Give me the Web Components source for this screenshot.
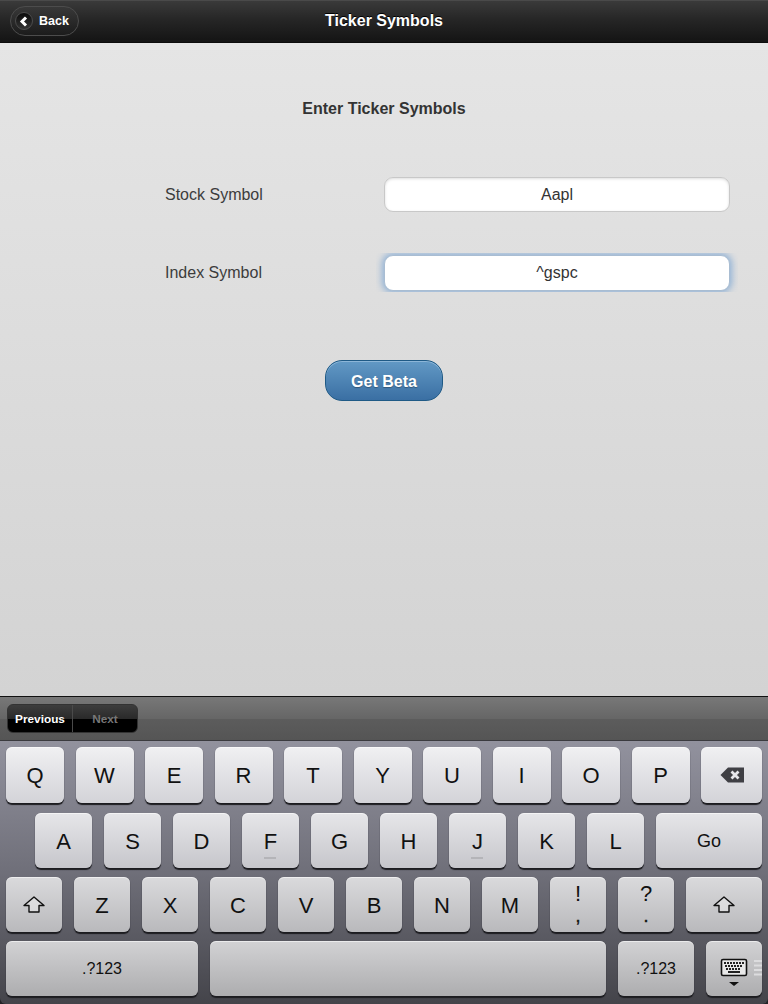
<!DOCTYPE html>
<html>
<head>
<meta charset="utf-8">
<title>Ticker Symbols</title>
<style>
  html, body { margin: 0; padding: 0; }
  body {
    width: 768px;
    height: 1004px;
    overflow: hidden;
    display: flex;
    flex-direction: column;
    background: #232327;
    font-family: "Liberation Sans", Arial, sans-serif;
  }
  svg { display: block; }
</style>
</head>
<body>
<ticker-header title-text="Ticker Symbols" back-text="Back"></ticker-header>
<ticker-page>
  <symbol-field label="Stock Symbol" value="Aapl"></symbol-field>
  <symbol-field label="Index Symbol" value="^gspc" focused></symbol-field>
</ticker-page>
<key-toolbar></key-toolbar>
<key-board>
  <key-row gap="11.5" top="#f0f0f2" bottom="#d3d3d8" style="height:56px;margin-bottom:10px">
    <key-cap w="58">Q</key-cap><key-cap w="58">W</key-cap><key-cap w="58">E</key-cap><key-cap w="58">R</key-cap><key-cap w="58">T</key-cap><key-cap w="58">Y</key-cap><key-cap w="58">U</key-cap><key-cap w="58">I</key-cap><key-cap w="58">O</key-cap><key-cap w="58">P</key-cap>
    <key-cap w="61"><svg width="24" height="16" viewBox="0 0 24 16"><path d="M0.5 8 L8 0.5 H24 V15.5 H8 Z" fill="#3f3f44"/><path d="M11.5 4.5 L18.5 11.5 M18.5 4.5 L11.5 11.5" stroke="#e6e6ea" stroke-width="2.8" fill="none"/></svg></key-cap>
  </key-row>
  <key-row gap="12" top="#e6e6e9" bottom="#c6c6cb" style="height:55px;margin-bottom:9px;padding-left:29px">
    <key-cap w="57">A</key-cap><key-cap w="57">S</key-cap><key-cap w="57">D</key-cap><key-cap w="57" mark>F</key-cap><key-cap w="57">G</key-cap><key-cap w="57">H</key-cap><key-cap w="57" mark>J</key-cap><key-cap w="57">K</key-cap><key-cap w="57">L</key-cap>
    <key-cap w="106" size="18">Go</key-cap>
  </key-row>
  <key-row gap="12" top="#dadadc" bottom="#b9b9bc" style="height:55px;margin-bottom:9px">
    <key-cap w="56"><shift-icon></shift-icon></key-cap>
    <key-cap w="56">Z</key-cap><key-cap w="56">X</key-cap><key-cap w="56">C</key-cap><key-cap w="56">V</key-cap><key-cap w="56">B</key-cap><key-cap w="56">N</key-cap><key-cap w="56">M</key-cap>
    <key-cap w="56" upper="!" lower=","></key-cap>
    <key-cap w="56" upper="?" lower="."></key-cap>
    <key-cap w="76"><shift-icon></shift-icon></key-cap>
  </key-row>
  <key-row gap="12" top="#d2d2d4" bottom="#adadaf" style="height:55px">
    <key-cap w="192" size="16">.?123</key-cap>
    <key-cap w="396"></key-cap>
    <key-cap w="76" size="16">.?123</key-cap>
    <key-cap w="56"><dismiss-icon></dismiss-icon></key-cap>
  </key-row>
</key-board>

<script>
class TickerHeader extends HTMLElement {
  connectedCallback() {
    this.attachShadow({ mode: 'open' });
    this.shadowRoot.innerHTML = `
      <style>
        :host {
          display: block;
          flex: none;
          height: 43px;
          border-top: 1px solid #4a4a4a;
          box-sizing: border-box;
          background: linear-gradient(#3a3a3a, #262626 45%, #141414);
          border-bottom: 1px solid #0c0c0c;
        }
        .bar { position: relative; height: 100%; display: flex; align-items: center; padding-left: 10px; }
        .back {
          display: flex;
          align-items: center;
          box-sizing: border-box;
          height: 30px;
          width: 69px;
          padding-left: 4px;
          border-radius: 15px;
          border: 1px solid #4c4c4c;
          background: linear-gradient(#383838, #1c1c1c);
          color: #fff;
          font: bold 12.5px "Liberation Sans", Arial, sans-serif;
          margin-top: -1px;
        }
        .arrow {
          width: 18px; height: 18px; border-radius: 50%;
          background: linear-gradient(#0c0c0c, #333);
          border: 1px solid #4c4c4c; box-sizing: border-box;
          display: flex; align-items: center; justify-content: center;
          margin-right: 6px;
        }
        h1 {
          position: absolute; left: 0; right: 0; top: 0; bottom: 0;
          margin: 0; display: flex; align-items: center; justify-content: center;
          font: bold 16px "Liberation Sans", Arial, sans-serif;
          color: #fff; padding-bottom: 1px;
          text-shadow: 0 -1px 0 #000;
        }
      </style>
      <div class="bar">
        <h1>${this.getAttribute('title-text')}</h1>
        <div class="back">
          <span class="arrow"><svg width="10" height="11" viewBox="0 0 10 11"><path d="M7 1.5 L3 5.5 L7 9.5" stroke="#fff" stroke-width="3" fill="none"/></svg></span>
          ${this.getAttribute('back-text')}
        </div>
      </div>`;
  }
}

class TickerPage extends HTMLElement {
  connectedCallback() {
    this.attachShadow({ mode: 'open' });
    this.shadowRoot.innerHTML = `
      <style>
        :host {
          display: block;
          flex: none;
          height: 653px;
          background: linear-gradient(#e5e5e5, #d3d3d3);
          color: #333;
          font-family: "Liberation Sans", Arial, sans-serif;
        }
        h2 { margin: 0; padding-top: 57px; height: 77px; text-align: center; font-size: 16px; line-height: 18px; font-weight: bold; }
        .actions { display: flex; justify-content: center; padding-top: 26px; }
        button {
          box-sizing: border-box;
          width: 118px; height: 41px;
          border-radius: 17px;
          border: 1px solid #1f5a86;
          background: linear-gradient(#6299c5, #3a6fa3);
          box-shadow: inset 0 1px 0 #8cb6d8;
          color: #fff;
          font: bold 16px "Liberation Sans", Arial, sans-serif;
          padding: 2px 0 0;
          text-shadow: 0 1px 1px rgba(0,0,0,.3);
        }
      </style>
      <h2>Enter Ticker Symbols</h2>
      <slot></slot>
      <div class="actions"><button>Get Beta</button></div>`;
  }
}

class SymbolField extends HTMLElement {
  connectedCallback() {
    this.attachShadow({ mode: 'open' });
    const focused = this.hasAttribute('focused');
    this.shadowRoot.innerHTML = `
      <style>
        :host {
          display: flex;
          align-items: center;
          height: ${focused ? 36 : 35}px;
          padding: 0 38px 0 165px;
          margin-bottom: 43px;
          font-size: 16px;
          color: #3c3c3c;
        }
        label { width: 219px; flex: none; }
        .input {
          flex: 1;
          height: 100%;
          box-sizing: border-box;
          background: #fff;
          border-radius: 9px;
          border: 1px solid ${focused ? '#a9bdd2' : '#c8c8c8'};
          box-shadow: ${focused ? '0 0 7px 2px #8fb1d6' : 'inset 0 1px 3px #ddd'};
          ${focused ? 'clip-path: inset(-2px -8px -1px -8px);' : ''}
          text-align: center;
          line-height: 34px;
          color: #333;
        }
      </style>
      <label>${this.getAttribute('label')}</label>
      <div class="input">${this.getAttribute('value')}</div>`;
  }
}

class KeyToolbar extends HTMLElement {
  connectedCallback() {
    this.attachShadow({ mode: 'open' });
    this.shadowRoot.innerHTML = `
      <style>
        :host {
          display: flex;
          align-items: center;
          flex: none;
          box-sizing: border-box;
          height: 45px;
          padding: 0 0 0 7px;
          border-top: 1px solid #111;
          border-bottom: 1px solid #3a3a3e;
          background: linear-gradient(#787878, #666 50%, #5c5c5c 52%, #555);
          font: bold 11.8px "Liberation Sans", Arial, sans-serif;
        }
        .seg {
          display: flex;
          height: 29px;
          width: 131px;
          border-radius: 6px;
          overflow: hidden;
          border: 1px solid #333;
          box-sizing: border-box;
          background: linear-gradient(#3d3d3d, #2a2a2a 50%, #000 52%, #000);
        }
        span { display: flex; align-items: center; justify-content: center; }
        .prev { width: 64px; color: #fff; border-right: 1px solid #4a4a4a; }
        .next { flex: 1; color: #777; }
      </style>
      <div class="seg"><span class="prev">Previous</span><span class="next">Next</span></div>`;
  }
}

class KeyBoard extends HTMLElement {
  connectedCallback() {
    this.attachShadow({ mode: 'open' });
    this.shadowRoot.innerHTML = `
      <style>
        :host {
          display: block;
          flex: none;
          height: 263px;
          box-sizing: border-box;
          padding: 6px 6px 0;
          background: linear-gradient(#92929e, #6f6f79 50%, #44444a);
          border-radius: 0 0 6px 6px;
        }
      </style>
      <slot></slot>`;
  }
}

class KeyRow extends HTMLElement {
  connectedCallback() {
    this.attachShadow({ mode: 'open' });
    this.shadowRoot.innerHTML = `
      <style>
        :host {
          display: flex;
          gap: ${this.getAttribute('gap')}px;
          --key-top: ${this.getAttribute('top')};
          --key-bottom: ${this.getAttribute('bottom')};
        }
      </style>
      <slot></slot>`;
  }
}

class KeyCap extends HTMLElement {
  connectedCallback() {
    this.attachShadow({ mode: 'open' });
    const upper = this.getAttribute('upper');
    const size = this.getAttribute('size') || 22;
    const hasText = !this.firstElementChild && this.textContent.trim();
    const mark = this.hasAttribute('mark') ? '<i></i>' : '';
    const inner = upper
      ? `<span class="stack"><b class="up">${upper}</b><b class="low">${this.getAttribute('lower')}</b></span>`
      : '<slot></slot>';
    this.shadowRoot.innerHTML = `
      <style>
        :host {
          display: flex;
          flex: none;
          position: relative;
          width: ${this.getAttribute('w')}px;
          box-sizing: border-box;
          padding-top: ${hasText && size != 16 ? 2 : 0}px;
          align-items: center;
          justify-content: center;
          border-radius: 6px;
          background: linear-gradient(var(--key-top), var(--key-bottom));
          box-shadow: 0 1.5px 1px #1c1c20, inset 0 1px 0 rgba(255,255,255,.55);
          color: #111;
          font: ${size}px "Liberation Sans", Arial, sans-serif;
        }
        .stack { display: flex; flex-direction: column; align-items: center; margin-top: -1px; }
        b { font-weight: normal; display: block; }
        .up { line-height: 25px; }
        .low { font-size: 18px; line-height: 21px; -webkit-text-stroke: 0.4px #111; }
        i { position: absolute; left: 22px; width: 12px; bottom: 9px; height: 2px; background: #b4b4b8; }
      </style>
      ${inner}${mark}`;
  }
}

class ShiftIcon extends HTMLElement {
  connectedCallback() {
    this.attachShadow({ mode: 'open' });
    this.shadowRoot.innerHTML = `
      <style>:host { display: block; } svg { display: block; }</style>
      <svg width="22" height="17" viewBox="0 0 22 17"><path d="M11 1 L21 9.5 H16 V16 H6 V9.5 H1 Z" fill="rgba(255,255,255,.35)" stroke="#111" stroke-width="1.4" stroke-linejoin="round"/></svg>`;
  }
}

class DismissIcon extends HTMLElement {
  connectedCallback() {
    this.attachShadow({ mode: 'open' });
    this.shadowRoot.innerHTML = `
      <style>
        :host { display: block; width: 56px; height: 55px; }
        svg { display: block; }
      </style>
      <svg width="56" height="55" viewBox="0 0 56 55">
        <rect x="15.5" y="18.5" width="25" height="16" rx="1.5" fill="#e8e8e8" stroke="#111" stroke-width="1.6"/>
        <g fill="#222">
          <rect x="18" y="21" width="2" height="2"/><rect x="21" y="21" width="2" height="2"/><rect x="24" y="21" width="2" height="2"/><rect x="27" y="21" width="2" height="2"/><rect x="30" y="21" width="2" height="2"/><rect x="33" y="21" width="2" height="2"/><rect x="36" y="21" width="2" height="2"/>
          <rect x="19" y="24" width="2" height="2"/><rect x="22" y="24" width="2" height="2"/><rect x="25" y="24" width="2" height="2"/><rect x="28" y="24" width="2" height="2"/><rect x="31" y="24" width="2" height="2"/><rect x="34" y="24" width="2" height="2"/>
          <rect x="20" y="27" width="2" height="2"/><rect x="23" y="27" width="2" height="2"/><rect x="26" y="27" width="2" height="2"/><rect x="29" y="27" width="2" height="2"/><rect x="32" y="27" width="2" height="2"/>
          <rect x="22" y="30" width="12" height="2"/>
        </g>
        <path d="M23 41 H33 L28 45 Z" fill="#111"/>
        <g fill="#dcdcde"><rect x="48" y="19" width="8" height="2"/><rect x="48" y="23.5" width="8" height="2"/><rect x="48" y="28" width="8" height="2"/><rect x="48" y="32.5" width="8" height="2"/></g>
      </svg>`;
  }
}

customElements.define('ticker-header', TickerHeader);
customElements.define('ticker-page', TickerPage);
customElements.define('symbol-field', SymbolField);
customElements.define('key-toolbar', KeyToolbar);
customElements.define('key-board', KeyBoard);
customElements.define('key-row', KeyRow);
customElements.define('key-cap', KeyCap);
customElements.define('shift-icon', ShiftIcon);
customElements.define('dismiss-icon', DismissIcon);
</script>
</body>
</html>
